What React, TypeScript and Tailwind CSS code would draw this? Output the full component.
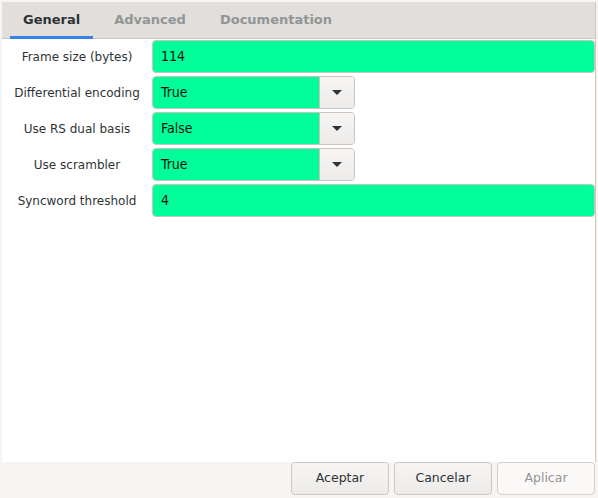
import React from 'react';

const labelCls = "w-[150px] shrink-0 text-center text-[12px] text-[#2e3436]";
const valueCls = "text-[14px] text-[#111] font-['DejaVu_Sans_Condensed','DejaVu_Sans',sans-serif]";

function Entry({ value }: { value: string }) {
  return (
    <div className={"flex-1 h-[33px] flex items-center pl-[8px] rounded-[4px] border border-[#c9c4bf] bg-[#00ff99] " + valueCls}>
      {value}
    </div>
  );
}

function Combo({ value }: { value: string }) {
  return (
    <div className="w-[203px] h-[33px] flex rounded-[4px] border border-[#c9c4bf] overflow-hidden">
      <div className={"flex-1 flex items-center pl-[8px] bg-[#00ff99] " + valueCls}>
        {value}
      </div>
      <div className="w-[35px] flex items-center justify-center border-l border-[#c9c4bf] bg-gradient-to-b from-[#f6f5f4] to-[#edebe9]">
        <svg width="10" height="5" viewBox="0 0 10 5">
          <path d="M0 0 L10 0 L5 5 Z" fill="#2e3436" />
        </svg>
      </div>
    </div>
  );
}

function Row({ label, children }: { label: string; children: React.ReactNode }) {
  return (
    <div className="flex items-center">
      <div className={labelCls}>{label}</div>
      {children}
    </div>
  );
}

export default function App() {
  const tabs = ['General', 'Advanced', 'Documentation'];
  return (
    <div className="w-[598px] h-[498px] bg-[#f6f5f4] flex flex-col pt-[2px] pl-[2px] font-['DejaVu_Sans',sans-serif]">
      <div className="w-[594px] flex-1 flex flex-col border-r border-[#cdc7c2]">
        <div className="h-[37px] flex items-end pl-[8px] gap-[8px] bg-[#e1dedb] border-b border-[#cdc7c2]">
          {tabs.map((t, i) => (
            <div
              key={t}
              className={
                i === 0
                  ? "h-full flex items-center px-[13px] pt-[1px] border-b-[3px] border-[#3584e4] text-[13px] font-bold text-[#2e3436] -mb-[1px]"
                  : "h-full flex items-center px-[13px] pt-[1px] border-b-[3px] border-transparent text-[13px] font-bold text-[#929595] -mb-[1px]"
              }
            >
              {t}
            </div>
          ))}
        </div>
        <div className="flex-1 bg-white flex flex-col gap-[3px] pt-[1px]">
          <Row label="Frame size (bytes)"><Entry value="114" /></Row>
          <Row label="Differential encoding"><Combo value="True" /></Row>
          <Row label="Use RS dual basis"><Combo value="False" /></Row>
          <Row label="Use scrambler"><Combo value="True" /></Row>
          <Row label="Syncword threshold"><Entry value="4" /></Row>
        </div>
      </div>
      <div className="h-[36px] flex justify-end items-start gap-[5px] pr-[3px]">
        {['Aceptar', 'Cancelar'].map((b) => (
          <button
            key={b}
            className="w-[98px] h-[33px] rounded-[4px] border border-[#cdc7c2] bg-gradient-to-b from-[#f6f5f4] to-[#edebe9] text-[12.5px] text-[#2e3436]"
          >
            {b}
          </button>
        ))}
        <button className="w-[98px] h-[33px] rounded-[4px] border border-[#d5d0cc] bg-[#faf9f8] text-[12.5px] text-[#929595]">
          Aplicar
        </button>
      </div>
    </div>
  );
}
